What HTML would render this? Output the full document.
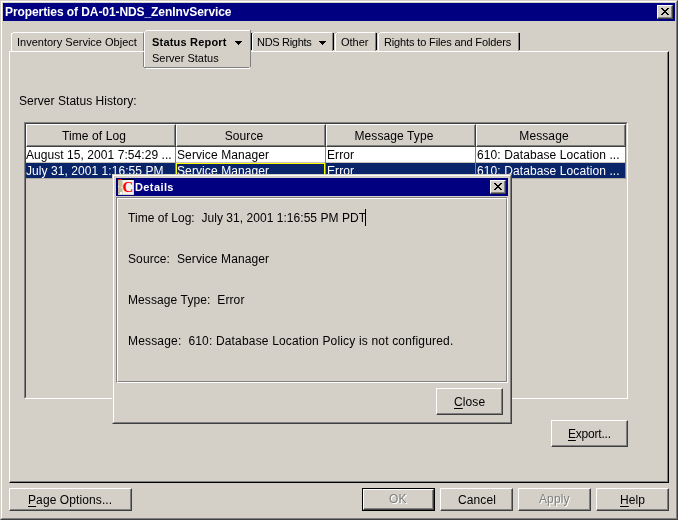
<!DOCTYPE html>
<html><head><meta charset="utf-8">
<style>
*{margin:0;padding:0;box-sizing:border-box}
html,body{width:678px;height:520px;overflow:hidden;background:#d4d0c8;font-family:"Liberation Sans",sans-serif;color:#000}
.a{position:absolute}
.t{position:absolute;white-space:pre;font-size:12px;line-height:12px;letter-spacing:0.1px;will-change:transform}
.s{letter-spacing:0}
.s{font-size:11px;line-height:11px}
.b{font-weight:bold}
.w{color:#fff}
.r{position:absolute}
u{text-decoration:underline;text-underline-offset:2px;text-decoration-thickness:1px}
</style></head><body>
<!-- window frame -->
<div class="a" style="left:0;top:0;width:678px;height:520px;background:#d4d0c8;border-top:1px solid #d4d0c8;border-left:1px solid #d4d0c8;border-right:1px solid #404040;border-bottom:1px solid #404040"></div>
<div class="a" style="left:1px;top:1px;width:676px;height:518px;border-top:1px solid #fff;border-left:1px solid #fff;border-right:1px solid #808080;border-bottom:1px solid #808080"></div>
<!-- title bar -->
<div class="a" style="left:3px;top:3px;width:672px;height:18px;background:#000080"></div>
<div class="t b w" style="left:5px;top:6px;font-size:12px;letter-spacing:-0.08px">Properties of DA-01-NDS_ZenInvService</div>
<!-- title close btn -->
<div class="a" style="left:657px;top:5px;width:16px;height:14px;background:#d4d0c8;border-top:1px solid #fff;border-left:1px solid #fff;border-right:1px solid #404040;border-bottom:1px solid #404040"></div>
<div class="a" style="left:658px;top:6px;width:14px;height:12px;border-right:1px solid #808080;border-bottom:1px solid #808080"></div>
<svg class="a" style="left:657px;top:5px" width="16" height="14"><path d="M4 3h2v1h1v1h2v-1h1v-1h2v1h-1v1h-1v1h-1v1h1v1h1v1h1v1h-2v-1h-1v-1h-2v1h-1v1h-2v-1h1v-1h1v-1h1v-1h-1v-1h-1v-1h-1z" fill="#000"/></svg>

<!-- main panel -->
<div class="a" style="left:9px;top:51px;width:660px;height:432px;border-top:1px solid #fff;border-left:1px solid #fff;border-right:1px solid #000;border-bottom:1px solid #000"></div>
<div class="a" style="left:10px;top:52px;width:658px;height:430px;border-right:1px solid #808080;border-bottom:1px solid #808080"></div>

<!-- tabs -->
<!-- tab1 -->
<div class="a" style="left:11px;top:33px;width:1px;height:18px;background:#fff"></div>
<div class="a" style="left:12px;top:33px;width:1px;height:1px;background:#fff"></div>
<div class="a" style="left:13px;top:32px;width:130px;height:1px;background:#fff"></div>
<div class="a" style="left:143px;top:33px;width:1px;height:18px;background:#808080"></div>
<div class="t s" style="left:17px;top:37px">Inventory Service Object</div>
<!-- tab NDS -->
<div class="a" style="left:252px;top:34px;width:1px;height:17px;background:#fff"></div>
<div class="a" style="left:253px;top:33px;width:1px;height:1px;background:#fff"></div>
<div class="a" style="left:254px;top:32px;width:78px;height:1px;background:#fff"></div>
<div class="a" style="left:332px;top:33px;width:1px;height:18px;background:#808080"></div>
<div class="a" style="left:333px;top:33px;width:1px;height:17px;background:#000"></div>
<div class="t s" style="left:257px;top:37px;letter-spacing:-0.3px">NDS Rights</div>
<svg class="a" style="left:319px;top:41px" width="7" height="4" shape-rendering="crispEdges"><path d="M0 0h7v1h-1v1h-1v1h-1v1h-1v-1h-1v-1h-1v-1h-1z" fill="#000"/></svg>
<!-- tab Other -->
<div class="a" style="left:335px;top:34px;width:1px;height:17px;background:#fff"></div>
<div class="a" style="left:336px;top:33px;width:1px;height:1px;background:#fff"></div>
<div class="a" style="left:337px;top:32px;width:38px;height:1px;background:#fff"></div>
<div class="a" style="left:375px;top:33px;width:1px;height:18px;background:#808080"></div>
<div class="a" style="left:376px;top:33px;width:1px;height:17px;background:#000"></div>
<div class="t s" style="left:341px;top:37px">Other</div>
<!-- tab Rights -->
<div class="a" style="left:378px;top:34px;width:1px;height:17px;background:#fff"></div>
<div class="a" style="left:379px;top:33px;width:1px;height:1px;background:#fff"></div>
<div class="a" style="left:380px;top:32px;width:138px;height:1px;background:#fff"></div>
<div class="a" style="left:518px;top:33px;width:1px;height:18px;background:#808080"></div>
<div class="a" style="left:519px;top:33px;width:1px;height:17px;background:#000"></div>
<div class="t s" style="left:384px;top:37px;letter-spacing:-0.14px">Rights to Files and Folders</div>

<!-- selected tab -->
<div class="a" style="left:144px;top:31px;width:107px;height:37px;background:#d4d0c8"></div>
<div class="a" style="left:144px;top:32px;width:1px;height:35px;background:#fff"></div>
<div class="a" style="left:145px;top:31px;width:1px;height:1px;background:#fff"></div>
<div class="a" style="left:146px;top:30px;width:104px;height:1px;background:#fff"></div>
<div class="a" style="left:250px;top:30px;width:1px;height:37px;background:#808080"></div>
<div class="a" style="left:251px;top:33px;width:1px;height:17px;background:#000"></div>
<div class="a" style="left:143px;top:52px;width:1px;height:15px;background:#808080"></div>
<div class="a" style="left:145px;top:67px;width:104px;height:1px;background:#808080"></div>
<div class="a" style="left:144px;top:67px;width:1px;height:1px;background:#808080"></div>
<div class="a" style="left:146px;top:68px;width:104px;height:1px;background:#fff"></div>
<div class="t s b" style="left:152px;top:37px;letter-spacing:0.2px">Status Report</div>
<svg class="a" style="left:235px;top:41px" width="7" height="4" shape-rendering="crispEdges"><path d="M0 0h7v1h-1v1h-1v1h-1v1h-1v-1h-1v-1h-1v-1h-1z" fill="#000"/></svg>
<div class="t s" style="left:152px;top:53px">Server Status</div>

<!-- label -->
<div class="t" style="left:19px;top:95px;letter-spacing:0.04px">Server Status History:</div>

<!-- scroll pane -->
<div class="a" style="left:24px;top:122px;width:604px;height:277px;border-top:1px solid #808080;border-left:1px solid #808080;border-right:1px solid #fff;border-bottom:1px solid #fff"></div>
<div class="a" style="left:25px;top:123px;width:602px;height:275px;border-top:1px solid #404040;border-left:1px solid #404040;border-right:1px solid #d4d0c8;border-bottom:1px solid #d4d0c8"></div>

<!-- header -->
<div class="a" style="left:26px;top:124px;width:150px;height:23px;border-top:1px solid #fff;border-left:1px solid #fff;border-right:1px solid #404040;border-bottom:1px solid #404040"></div>
<div class="a" style="left:27px;top:125px;width:148px;height:21px;border-right:1px solid #808080;border-bottom:1px solid #808080"></div>
<div class="t" style="left:26px;top:130px;width:136px;text-align:center">Time of Log</div>
<div class="a" style="left:176px;top:124px;width:150px;height:23px;border-top:1px solid #fff;border-left:1px solid #fff;border-right:1px solid #404040;border-bottom:1px solid #404040"></div>
<div class="a" style="left:177px;top:125px;width:148px;height:21px;border-right:1px solid #808080;border-bottom:1px solid #808080"></div>
<div class="t" style="left:176px;top:130px;width:136px;text-align:center">Source</div>
<div class="a" style="left:326px;top:124px;width:150px;height:23px;border-top:1px solid #fff;border-left:1px solid #fff;border-right:1px solid #404040;border-bottom:1px solid #404040"></div>
<div class="a" style="left:327px;top:125px;width:148px;height:21px;border-right:1px solid #808080;border-bottom:1px solid #808080"></div>
<div class="t" style="left:326px;top:130px;width:136px;text-align:center">Message Type</div>
<div class="a" style="left:476px;top:124px;width:150px;height:23px;border-top:1px solid #fff;border-left:1px solid #fff;border-right:1px solid #404040;border-bottom:1px solid #404040"></div>
<div class="a" style="left:477px;top:125px;width:148px;height:21px;border-right:1px solid #808080;border-bottom:1px solid #808080"></div>
<div class="t" style="left:476px;top:130px;width:136px;text-align:center">Message</div>
<!-- rows -->
<div class="a" style="left:26px;top:147px;width:599px;height:15px;background:#fff"></div>
<div class="a" style="left:26px;top:162px;width:599px;height:1px;background:#c8c4bc"></div>
<div class="a" style="left:26px;top:163px;width:599px;height:15px;background:#0a246a"></div>
<div class="a" style="left:26px;top:178px;width:599px;height:1px;background:#b0aca4"></div>
<div class="a" style="left:175px;top:147px;width:1px;height:32px;background:#808080"></div>
<div class="a" style="left:325px;top:147px;width:1px;height:32px;background:#808080"></div>
<div class="a" style="left:475px;top:147px;width:1px;height:32px;background:#808080"></div>
<div class="a" style="left:625px;top:147px;width:1px;height:32px;background:#808080"></div>
<div class="a" style="left:176px;top:163px;width:149px;height:15px;border:1px solid #ffff00;border-bottom:0"></div>
<div class="t" style="left:26px;top:149px;letter-spacing:0.06px">August 15, 2001 7:54:29 ...</div>
<div class="t" style="left:177px;top:149px">Service Manager</div>
<div class="t" style="left:327px;top:149px">Error</div>
<div class="t" style="left:477px;top:149px">610: Database Location ...</div>
<div class="t w" style="left:26px;top:165px;letter-spacing:0.06px">July 31, 2001 1:16:55 PM</div>
<div class="t w" style="left:177px;top:165px">Service Manager</div>
<div class="t w" style="left:327px;top:165px">Error</div>
<div class="t w" style="left:477px;top:165px">610: Database Location ...</div>

<!-- export -->
<div class="a" style="left:551px;top:420px;width:77px;height:27px;border-top:1px solid #fff;border-left:1px solid #fff;border-right:1px solid #404040;border-bottom:1px solid #404040"></div>
<div class="a" style="left:552px;top:421px;width:75px;height:25px;border-right:1px solid #808080;border-bottom:1px solid #808080"></div>
<div class="t" style="left:568px;top:428px;letter-spacing:-0.2px"><u>E</u>xport...</div>

<!-- bottom buttons -->
<div class="a" style="left:9px;top:488px;width:123px;height:23px;border-top:1px solid #fff;border-left:1px solid #fff;border-right:1px solid #404040;border-bottom:1px solid #404040"></div>
<div class="a" style="left:10px;top:489px;width:121px;height:21px;border-right:1px solid #808080;border-bottom:1px solid #808080"></div>
<div class="t" style="left:28px;top:494px"><u>P</u>age Options...</div>

<div class="a" style="left:362px;top:488px;width:73px;height:23px;border:1px solid #000"></div>
<div class="a" style="left:363px;top:489px;width:71px;height:21px;border-top:1px solid #fff;border-left:1px solid #fff;border-right:1px solid #404040;border-bottom:1px solid #404040"></div>
<div class="a" style="left:364px;top:490px;width:69px;height:19px;border-right:1px solid #808080;border-bottom:1px solid #808080"></div>
<div class="t" style="left:390px;top:494px;color:#fff">OK</div>
<div class="t" style="left:389px;top:493px;color:#808080">OK</div>

<div class="a" style="left:440px;top:488px;width:73px;height:23px;border-top:1px solid #fff;border-left:1px solid #fff;border-right:1px solid #404040;border-bottom:1px solid #404040"></div>
<div class="a" style="left:441px;top:489px;width:71px;height:21px;border-right:1px solid #808080;border-bottom:1px solid #808080"></div>
<div class="t" style="left:458px;top:494px">Cancel</div>

<div class="a" style="left:518px;top:488px;width:73px;height:23px;border-top:1px solid #fff;border-left:1px solid #fff;border-right:1px solid #404040;border-bottom:1px solid #404040"></div>
<div class="a" style="left:519px;top:489px;width:71px;height:21px;border-right:1px solid #808080;border-bottom:1px solid #808080"></div>
<div class="t" style="left:540px;top:494px;color:#fff">Apply</div>
<div class="t" style="left:539px;top:493px;color:#808080">Apply</div>

<div class="a" style="left:596px;top:488px;width:73px;height:23px;border-top:1px solid #fff;border-left:1px solid #fff;border-right:1px solid #404040;border-bottom:1px solid #404040"></div>
<div class="a" style="left:597px;top:489px;width:71px;height:21px;border-right:1px solid #808080;border-bottom:1px solid #808080"></div>
<div class="t" style="left:620px;top:494px"><u>H</u>elp</div>

<!-- details dialog -->
<div class="a" style="left:112px;top:174px;width:400px;height:250px;background:#d4d0c8;border-top:1px solid #d4d0c8;border-left:1px solid #d4d0c8;border-right:1px solid #404040;border-bottom:1px solid #404040"></div>
<div class="a" style="left:113px;top:175px;width:398px;height:248px;border-top:1px solid #fff;border-left:1px solid #fff;border-right:1px solid #808080;border-bottom:1px solid #808080"></div>
<div class="a" style="left:116px;top:178px;width:392px;height:18px;background:#000080"></div>
<div class="t b w" style="left:135px;top:181px;font-size:11px;letter-spacing:0.4px">Details</div>
<!-- icon -->
<svg class="a" style="left:118px;top:179px" width="16" height="16" shape-rendering="crispEdges">
<rect x="0" y="0" width="16" height="16" fill="#f2f2ee"/>
<rect x="0" y="1" width="4" height="15" fill="#c6be9a"/>
<rect x="4" y="1" width="1" height="15" fill="#dcd8c8"/>
<rect x="0" y="0" width="4" height="1" fill="#f00000"/>
<rect x="4" y="0" width="12" height="1" fill="#000"/>
<rect x="0" y="7" width="1" height="1" fill="#fff"/>
<rect x="3" y="8" width="1" height="1" fill="#fff"/>
<rect x="2" y="13" width="2" height="2" fill="#fff"/>
<rect x="15" y="1" width="1" height="15" fill="#d8d8d0"/>
<rect x="0" y="15" width="16" height="1" fill="#d8d8d0"/>
<text x="4.5" y="13" font-family="Liberation Serif" font-weight="bold" font-size="15" fill="#f00" shape-rendering="auto">C</text>
</svg>
<!-- dialog close btn -->
<div class="a" style="left:490px;top:180px;width:16px;height:14px;background:#d4d0c8;border-top:1px solid #fff;border-left:1px solid #fff;border-right:1px solid #404040;border-bottom:1px solid #404040"></div>
<div class="a" style="left:491px;top:181px;width:14px;height:12px;border-right:1px solid #808080;border-bottom:1px solid #808080"></div>
<svg class="a" style="left:490px;top:180px" width="16" height="14"><path d="M4 3h2v1h1v1h2v-1h1v-1h2v1h-1v1h-1v1h-1v1h1v1h1v1h1v1h-2v-1h-1v-1h-2v1h-1v1h-2v-1h1v-1h1v-1h1v-1h-1v-1h-1v-1h-1z" fill="#000"/></svg>
<!-- etched panel -->
<div class="a" style="left:116px;top:197px;width:392px;height:186px;border-top:1px solid #808080;border-left:1px solid #808080;border-right:1px solid #fff;border-bottom:1px solid #fff"></div>
<div class="a" style="left:117px;top:198px;width:390px;height:184px;border-top:1px solid #fff;border-left:1px solid #fff;border-right:1px solid #808080;border-bottom:1px solid #808080"></div>
<div class="t" style="left:128px;top:212px;letter-spacing:0.04px">Time of Log:  July 31, 2001 1:16:55 PM PDT</div>
<div class="a" style="left:365px;top:209px;width:1px;height:17px;background:#000"></div>
<div class="t" style="left:128px;top:253px">Source:  Service Manager</div>
<div class="t" style="left:128px;top:294px">Message Type:  Error</div>
<div class="t" style="left:128px;top:335px;letter-spacing:0.17px">Message:  610: Database Location Policy is not configured.</div>
<!-- close -->
<div class="a" style="left:436px;top:388px;width:67px;height:27px;border-top:1px solid #fff;border-left:1px solid #fff;border-right:1px solid #404040;border-bottom:1px solid #404040"></div>
<div class="a" style="left:437px;top:389px;width:65px;height:25px;border-right:1px solid #808080;border-bottom:1px solid #808080"></div>
<div class="t" style="left:454px;top:396px"><u>C</u>lose</div>
</body></html>
